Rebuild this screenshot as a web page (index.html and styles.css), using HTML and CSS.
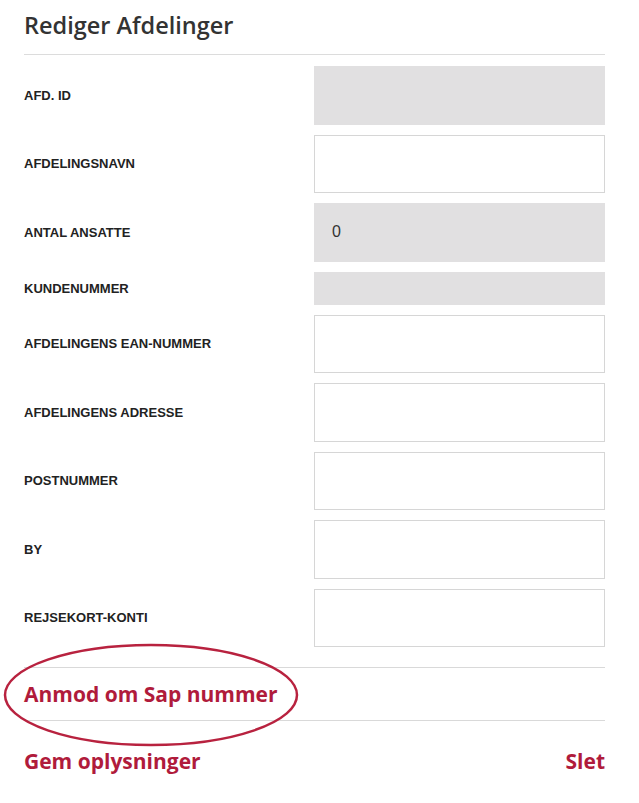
FILE: index.html
```html
<!DOCTYPE html>
<html lang="da">
<head>
    <meta charset="UTF-8">
    <meta name="viewport" content="width=device-width, initial-scale=1.0">
    <title>Rediger Afdelinger</title>
    <link rel="stylesheet" href="styles.css">
</head>
<body>

    <div class="panel">
        <h2 class="panel-title">Rediger Afdelinger</h2>

        <!-- Department form -->
        <form class="dept-form">
            <div class="row">
                <label for="afdId">AFD. ID</label>
                <input type="text" id="afdId" class="readonly" readonly>
            </div>
            <div class="row">
                <label for="afdNavn">AFDELINGSNAVN</label>
                <input type="text" id="afdNavn">
            </div>
            <div class="row">
                <label for="ansatte">ANTAL ANSATTE</label>
                <input type="text" id="ansatte" class="readonly" value="0" readonly>
            </div>
            <div class="row">
                <label for="kundenr">KUNDENUMMER</label>
                <input type="text" id="kundenr" class="readonly short" readonly>
            </div>
            <div class="row">
                <label for="ean">AFDELINGENS EAN-NUMMER</label>
                <input type="text" id="ean">
            </div>
            <div class="row">
                <label for="adresse">AFDELINGENS ADRESSE</label>
                <input type="text" id="adresse">
            </div>
            <div class="row">
                <label for="postnr">POSTNUMMER</label>
                <input type="text" id="postnr">
            </div>
            <div class="row">
                <label for="by">BY</label>
                <input type="text" id="by">
            </div>
            <div class="row">
                <label for="rejsekort">REJSEKORT-KONTI</label>
                <input type="text" id="rejsekort">
            </div>
        </form>

        <div class="sap-row">
            <a href="#" class="red-link">Anmod om Sap nummer</a>
            <!-- annotation circle -->
            <svg class="ring" width="296" height="106" viewBox="0 0 296 106">
                <ellipse cx="148" cy="53" rx="146" ry="50" fill="none" stroke="#b8223f" stroke-width="2.5"/>
            </svg>
        </div>

        <div class="actions">
            <a href="#" class="red-link">Gem oplysninger</a>
            <a href="#" class="red-link">Slet</a>
        </div>
    </div>

</body>
</html>
```

FILE: styles.css
```css
body {
    margin: 0;
    padding: 0;
    background-color: #fff;
    font-family: "Liberation Sans", Arial, sans-serif;
    color: #222;
}

.panel {
    width: 581px;
    margin-left: 24px;
    padding-top: 9px;
}

.panel-title {
    font-family: "Open Sans", sans-serif;
    font-weight: 600;
    font-size: 23.5px;
    color: #333;
    margin: 0;
    padding-bottom: 13px;
    border-bottom: 1px solid #dcdcdc;
    line-height: 32px;
}

.dept-form {
    display: flex;
    flex-direction: column;
    gap: 10px;
    padding-top: 11px;
    padding-bottom: 20px;
}

.row {
    display: flex;
    align-items: center;
    justify-content: space-between;
}

label {
    font-size: 13px;
    font-weight: 700;
    color: #222;
}

input {
    box-sizing: border-box;
    width: 291px;
    height: 58.5px;
    border: 1px solid #d6d6d6;
    background-color: #fff;
    padding: 0 17px;
    font-family: "Liberation Sans", Arial, sans-serif;
    font-size: 16px;
    color: #333;
    outline: none;
}

input.readonly {
    background-color: #e1e0e1;
    border-color: #e1e0e1;
}

input.short {
    height: 33px;
}

.sap-row {
    position: relative;
    border-top: 1px solid #d9d9d9;
    border-bottom: 1px solid #d9d9d9;
    height: 52px;
    display: flex;
    align-items: center;
}

.ring {
    position: absolute;
    left: -21px;
    top: -26px;
    pointer-events: none;
}

.red-link {
    font-family: "Open Sans", sans-serif;
    font-weight: 700;
    font-size: 21px;
    color: #b01b3b;
    text-decoration: none;
}

.actions {
    display: flex;
    justify-content: space-between;
    align-items: center;
    height: 80px;
}
```
